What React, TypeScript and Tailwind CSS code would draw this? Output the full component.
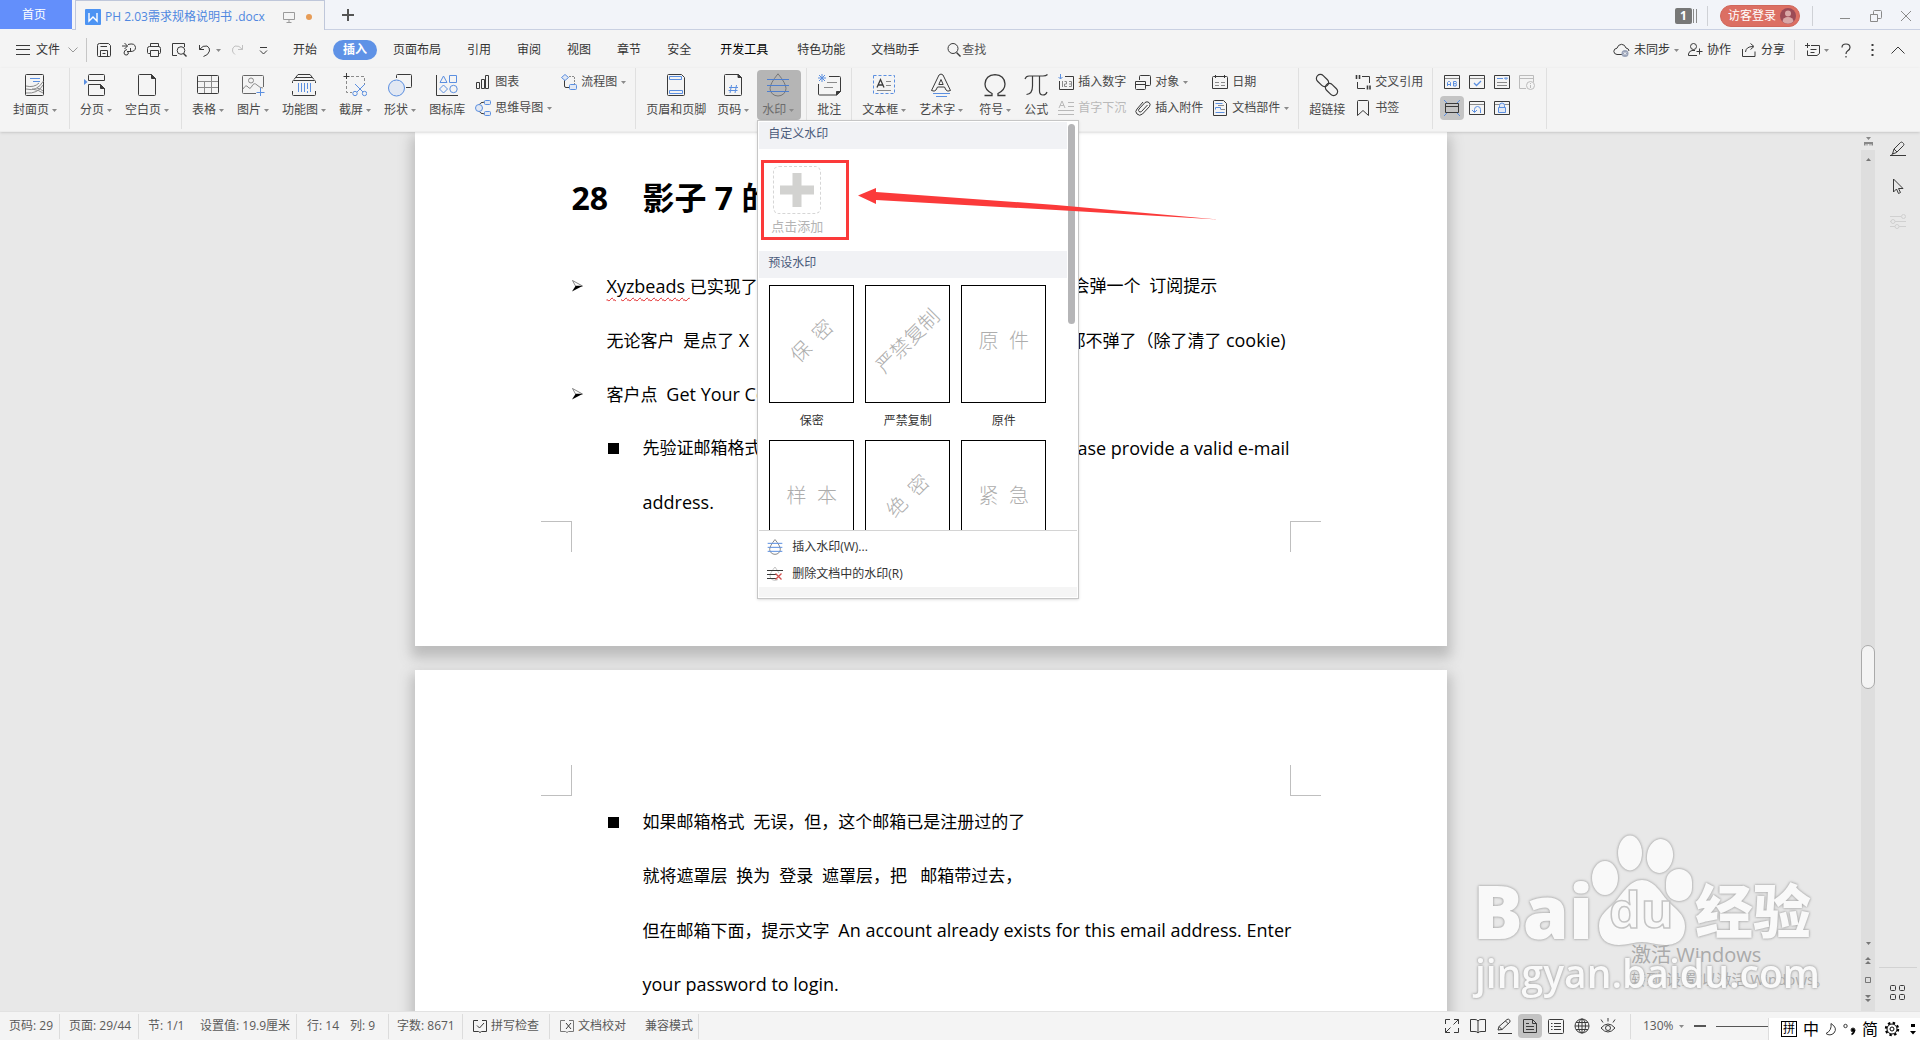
import React from "react";

const K = "#3a3a3a";
const B = "#5b8fe0";
const G = "#8a8a8a";

type IconProps = { w?: number; h?: number; c?: string; sw?: number; children: React.ReactNode };

function Ico({ w = 16, h = 16, c = K, sw = 1, children }: IconProps) {
  return (
    <svg width={w} height={h} viewBox={`0 0 ${w} ${h}`} fill="none" stroke={c} strokeWidth={sw} className="shrink-0" aria-hidden="true">
      {children}
    </svg>
  );
}

function Arrow() {
  return (
    <svg width="5" height="3" viewBox="0 0 5 3" className="shrink-0" aria-hidden="true">
      <path d="M0 0h5L2.500 3z" fill="#8a8a8a" />
    </svg>
  );
}

function Sep() {
  return <div className="h-[61px] w-px shrink-0 bg-[#e0e0e0]" />;
}

function Big({ icon, label, arrow, active }: { icon: React.ReactNode; label: string; arrow?: boolean; active?: boolean }) {
  return (
    <button
      className={
        "flex h-[50px] shrink-0 flex-col items-center gap-[5px] rounded pt-[3px] pl-[5px] " +
        (arrow ? "pr-[7px] " : "pr-[5px] ") +
        (active ? "bg-[#b5b5b5] text-[#6c6c6c]" : "")
      }
    >
      {icon}
      <span className="flex items-center gap-[3px] leading-4">
        {label}
        {arrow && <Arrow />}
      </span>
    </button>
  );
}

function Small({ icon, label, arrow, off }: { icon: React.ReactNode; label: string; arrow?: boolean; off?: boolean }) {
  return (
    <button className={"flex h-6 items-center gap-1 px-1 " + (off ? "text-[#b9b9b9]" : "")}>
      {icon}
      <span>{label}</span>
      {arrow && <Arrow />}
    </button>
  );
}

function FormBtn({ label, active, children }: { label: string; active?: boolean; children: React.ReactNode }) {
  return (
    <button aria-label={label} className={"flex size-6 items-center justify-center rounded " + (active ? "bg-[#c4c4c4]" : "")}>
      {children}
    </button>
  );
}

const Group = ({ children }: { children: React.ReactNode }) => <div className="flex gap-px px-[5px] pt-0.5">{children}</div>;
const Col = ({ children }: { children: React.ReactNode }) => <div className="flex flex-col gap-0.5">{children}</div>;

function TitleBar() {
  return (
    <header className="flex h-[30px] shrink-0 bg-[#f2f4f9]">
      <button className="mb-px w-[72px] bg-[#638ffb] pr-1 text-white">首页</button>
      <div className="w-[3px] border-b border-[#bfc7da]" />
      <div className="flex w-[250px] items-center border-x border-t border-[#bfc7da] bg-[#f4f4f4] pt-0.5 pl-[9px] text-[#4f87e0]">
        <svg width="16" height="16" viewBox="0 0 16 16" className="mr-1 shrink-0" aria-hidden="true">
          <rect width="16" height="16" rx="1" fill="#4d94f3" />
          <path d="M4 4v8l4-4 4 4V4" fill="none" stroke="#fff" strokeWidth="1.4" />
        </svg>
        <span className="w-[178px] whitespace-pre">PH 2.03需求规格说明书 .docx</span>
        <Ico w={12} h={12} c="#9a9a9a">
          <path d="M.5 1.500h11v7H.5zM6 8.500v2.500M3.500 11.500h5" />
        </Ico>
        <span className="ml-[11px] size-1.5 rounded-full bg-[#e79c56]" />
      </div>
      <div className="flex flex-1 items-center border-b border-[#c9d0e2]">
        <button aria-label="新建标签" className="ml-[17px]">
          <Ico w={12} h={12} c="#555" sw={2}>
            <path d="M6 0v12M0 6h12" />
          </Ico>
        </button>
        <div className="ml-auto flex items-center pt-0.5">
          <span className="flex h-4 w-[17px] items-center justify-center rounded-xs bg-[#777] font-bold text-white">1</span>
          <Ico w={5} h={16} c="#8a8a8a">
            <path d="M1.500 1v14M4.500 1v14" />
          </Ico>
          <div className="ml-2.5 h-5 w-px bg-[#cfd1d6]" />
          <button className="ml-3 flex h-[22px] w-20 items-center justify-center gap-1 rounded-full border border-[#d0675c] bg-[#dc6f63] pl-1 text-white">
            访客登录
            <svg width="16" height="16" viewBox="0 0 16 16" aria-hidden="true">
              <circle cx="8" cy="8" r="8" fill="#9c4a56" />
              <circle cx="8" cy="5.500" r="3" fill="#d9a7a7" />
              <path d="M2.500 13.500a5.500 4.500 0 0 1 11 0A8 8 0 0 1 2.500 13.500z" fill="#d9a7a7" />
            </svg>
          </button>
          <div className="ml-3 h-5 w-px bg-[#cfd1d6]" />
          <button aria-label="最小化" className="ml-[27px]">
            <Ico w={11} h={12} c={G}>
              <path d="M0 8.500h10" />
            </Ico>
          </button>
          <button aria-label="还原" className="ml-[19px]">
            <Ico w={12} h={12} c={G}>
              <path d="M.5 4.500h7v7h-7zM3.500 4V1.500q0-1 1-1h6q1 0 1 1v6q0 1-1 1H8" />
            </Ico>
          </button>
          <button aria-label="关闭" className="mr-2 ml-[18px]">
            <Ico w={12} h={12} c={G}>
              <path d="M1 1l10 10M11 1L1 11" />
            </Ico>
          </button>
        </div>
      </div>
    </header>
  );
}

const tabsA = ["页面布局", "引用", "审阅", "视图", "章节", "安全"];

function MenuBar() {
  return (
    <nav className="flex h-[38px] shrink-0 items-center pt-0.5 pl-4 text-[#333]">
      <button className="flex items-center gap-1.5">
        <Ico w={14} h={10}>
          <path d="M0 .5h14M0 4.500h14M0 9.500h14" />
        </Ico>
        <span className="mr-0.5">文件</span>
        <Ico w={10} h={6} c="#999">
          <path d="M.5.5L5 5l4.500-4.500" />
        </Ico>
      </button>
      <div className="ml-2 h-6 w-px bg-[#c6c6c6]" />
      <div className="flex items-center gap-[9px] pl-[9px]">
        <button aria-label="保存"><Ico><path d="M1.500 3.500q0-2 2-2h9l2 2v10q0 1-1 1h-11q-1 0-1-1zM4.500 14.500v-6h7v6M4.500 4.500h6.500M6.500 11.500h3" /></Ico></button>
        <button aria-label="输出为PDF"><Ico><path d="M3.500 1l3 3-3 3M1 4h5.500M7 2.500q7-2 7.500 3q0 4-5 4H6M9.500 6v4M6 7.500q-3 .5-3 3.500q.3 2.500 3 2q2-.5 1-3" /></Ico></button>
        <button aria-label="打印"><Ico><path d="M4.500 5V1.500h8V5M4 11.500H2.500q-1 0-1-1V6.500q0-2 2-2h9q2 0 2 2v4q0 1-1 1H12M4.500 8.500h8v6h-8z" /></Ico></button>
        <button aria-label="打印预览"><Ico><path d="M6 13.500H1.500v-12h12V5" /><circle cx="10" cy="8.500" r="3.800" /><path d="M12.500 11.500l3 3" strokeWidth="1.400" /></Ico></button>
      </div>
      <button aria-label="撤消" className="ml-[11px] flex items-center gap-[5px]">
        <Ico w={13} h={13}><path d="M1.500 1v4.500H6M1.500 5.500Q5 1 9 2q3 1.500 2.500 5-1 4-6 5.500" /></Ico>
        <Arrow />
      </button>
      <button aria-label="恢复" className="ml-2.5">
        <Ico w={13} h={13} c="#c0c0c0"><path d="M11.500 1v4.500H7M11.500 5.500Q8 1 4 2q-3 1.500-2.500 5 .5 2 2.500 3.500" /></Ico>
      </button>
      <button aria-label="自定义快速访问工具栏" className="ml-[15px]">
        <Ico w={9} h={9}><path d="M1 1.500h7M1 4.500l3.500 3.500L8 4.500" /></Ico>
      </button>
      <div className="ml-[15px] flex items-center gap-1.5">
        <button className="h-5 px-2.5">开始</button>
        <button className="h-5 rounded-full bg-[#5f92e6] px-2.5 font-bold text-white">插入</button>
        {tabsA.map((t) => (
          <button key={t} className="h-5 px-2.5">{t}</button>
        ))}
      </div>
      <button className="mx-[9px] h-5 px-2.5 text-black">开发工具</button>
      <div className="flex gap-1.5">
        <button className="h-5 px-2.5">特色功能</button>
        <button className="h-5 px-2.5">文档助手</button>
      </div>
      <button className="ml-[17px] flex items-center text-[#555]">
        <Ico><circle cx="7" cy="6.500" r="5" /><path d="M10.500 10.500l4 4" strokeWidth="1.400" /></Ico>
        查找
      </button>
      <div className="ml-auto flex items-center">
        <button className="flex items-center gap-1">
          <Ico w={17}><path d="M10 12.500H4q-3-.3-3.200-3.200Q1 6.500 4 6.200 5 2.500 8.500 2.300q3.500.2 4.500 3.700 3 .5 3 3" /><circle cx="12" cy="11.500" r="3.500" fill="#9aa3b8" stroke="none" /><path d="M10.800 10.300l2.400 2.400M13.200 10.300l-2.400 2.400" stroke="#fff" /></Ico>
          未同步
          <Arrow />
        </button>
        <button className="ml-2 flex items-center gap-1">
          <Ico><circle cx="6.500" cy="4.500" r="3" /><path d="M10 13.500H1.500V12q.5-3 3.500-3.500h3M12.500 6.500v6M9.500 9.500h6" /></Ico>
          协作
        </button>
        <button className="ml-2.5 flex items-center gap-1">
          <Ico><path d="M1.500 7v7.500h12.500V9.500M4.500 10Q5 4.500 12 4.500M9.500 1.500l3.500 3-3.500 3" /></Ico>
          分享
        </button>
        <div className="mx-[9px] h-5 w-px bg-[#d8d8d8]" />
        <button aria-label="工具" className="flex items-center gap-1">
          <Ico><path d="M3.500 1v5M1 3.500h5M7 3.500h8.500v8l-2.500 2H3.500v-5M6.500 7.500h6M6.500 10.500h4" /></Ico>
          <Arrow />
        </button>
        <button aria-label="帮助" className="ml-3">
          <Ico w={10} h={15} sw={1.200}><path d="M1 4.500Q1 1 5 1t4 3.500Q9 6.500 6.500 8 5 9 5 11M5 13v1.500" /></Ico>
        </button>
        <button aria-label="更多" className="ml-5">
          <Ico w={3} h={12} sw={2}><path d="M1.500 0v2M1.500 5v2M1.500 10v2" /></Ico>
        </button>
        <button aria-label="收起功能区" className="mr-[15px] ml-[17px]">
          <Ico w={14} h={8}><path d="M.5 7.500L7 1l6.500 6.500" /></Ico>
        </button>
      </div>
    </nav>
  );
}

function DropIcon({ size = 24, line = B, drop = G }: { size?: number; line?: string; drop?: string }) {
  return (
    <svg width={size} height={size} viewBox="0 0 24 24" fill="none" strokeWidth={size > 20 ? 1 : 1.5} className="shrink-0" aria-hidden="true">
      <path d="M12 .8Q4 10.500 4 15.500a8 7.500 0 0 0 16 0Q20 10.500 12 .8z" stroke={drop} />
      <path d="M1 6.500h22M1 12.500h22M1 18.500h22" stroke={line} />
    </svg>
  );
}

const previews = [
  { name: "保密", text: "保  密", tilt: true },
  { name: "严禁复制", text: "严禁复制", tilt: true },
  { name: "原件", text: "原  件", tilt: false },
  { name: "样本", text: "样  本", tilt: false },
  { name: "绝密", text: "绝  密", tilt: true },
  { name: "紧急", text: "紧  急", tilt: false },
];

function WatermarkMenu() {
  return (
    <div className="absolute top-full left-0 z-20 w-[322px] border border-[#c6c6c6] bg-white text-left shadow-sm">
      <div className="flex h-[409px] gap-px overflow-hidden pt-px pr-0.5 pl-px">
        <div className="flex-1">
          <h2 className="h-[27px] bg-[#f1f2f5] pl-[9px] leading-6 text-[#4a5a7a]">自定义水印</h2>
          <div className="h-[102px] pt-[17px] pl-3">
            <button className="flex flex-col items-center gap-1 text-[13px] text-[#b4b4b4]">
              <span className="flex size-12 items-center justify-center rounded-md border border-dashed border-[#d6d6d6]">
                <Ico w={36} h={36} c="#d2d2d0" sw={9}>
                  <path d="M18 1v34M1 18h34" />
                </Ico>
              </span>
              <span className="leading-4">点击添加</span>
            </button>
          </div>
          <h2 className="h-[27px] bg-[#f1f2f5] pl-[9px] leading-6 text-[#4a5a7a]">预设水印</h2>
          <div className="grid grid-cols-[repeat(3,85px)] gap-x-[11px] pt-[7px] pl-2.5">
            {previews.map((p) => (
              <button key={p.name} className="flex h-[155px] flex-col text-[#333]">
                <span className="flex h-[118px] w-full items-center justify-center border border-black pb-1.5 text-[20px] font-light text-[#adadad]">
                  <span className={"whitespace-pre " + (p.tilt ? "-rotate-45" : "")}>{p.text}</span>
                </span>
                <span className="w-full pt-2.5 text-center leading-4">{p.name}</span>
              </button>
            ))}
          </div>
        </div>
        <div className="w-2 pt-0.5">
          <div className="h-[200px] w-[7px] rounded-full bg-[#b5b5b7]" />
        </div>
      </div>
      <div className="mx-px border-t border-[#d4d4d4] pt-0.5 text-[#333]">
        <button className="flex h-[27px] w-full items-center gap-[9px] pl-2">
          <DropIcon size={16} />
          插入水印(W)...
        </button>
        <button className="flex h-[27px] w-full items-center gap-[9px] pl-2">
          <Ico>
            <path d="M8 1Q3 7 3 10a5 4.500 0 0 0 8 3.500M8 1l4 6" stroke="#c4c4c4" />
            <path d="M0 4.500h16M0 8.500h9M0 12.500h9" />
            <path d="M8.500 7.500l6 6M14.500 7.500l-6 6" stroke="#d2504f" strokeWidth="1.300" />
          </Ico>
          删除文档中的水印(R)
        </button>
        <div className="mb-px h-2.5 bg-[#f5f5f5]" />
      </div>
      <div className="pointer-events-none absolute top-[39px] left-[3px] h-20 w-[88px] border-3 border-[#fb3a3a]" />
      <svg width="362" height="34" viewBox="0 0 362 34" className="pointer-events-none absolute top-[66px] left-[100px] max-w-none" aria-hidden="true">
        <path d="M0 8.500L18 1v4l180 13 162 14.500L198 23 18 13v4z" fill="#fb3a3a" />
      </svg>
    </div>
  );
}

function Ribbon() {
  return (
    <div className="relative z-10 flex h-16 shrink-0 border-b border-[#ececec] bg-[#f4f4f4] pl-[3px] text-[#484848] shadow-sm">
      <Group>
        <Big label="封面页" arrow icon={<Ico w={24} h={24}><rect x="2.500" y="1.500" width="18" height="21" rx="1" /><path d="M7 5.500h10M10 8.500h7" stroke={B} /><path d="M3 13q8 2 13-3M3 16q11 3 17.500-8M3 20q12 1 17-8M9 16q7 1 11 4M14 15q4 1 6 3" stroke={G} /></Ico>} />
      </Group>
      <Sep />
      <Group>
        <Big label="分页" arrow icon={<Ico w={24} h={24}><path d="M0 6l3.500 3L0 12z" fill={B} stroke="none" /><path d="M4.500 7.500v-5q0-1 1-1h14q1 0 1 1v5zM4.500 22.500v-11h12l4 4v6q0 1-1 1h-14q-1 0-1-1" /><path d="M16.500 11.500v4h4z" fill={K} /></Ico>} />
        <Big label="空白页" arrow icon={<Ico w={24} h={24}><path d="M3.500 2.500q0-1 1-1h12l4 4v16q0 1-1 1h-15q-1 0-1-1z" /><path d="M16.500 1.500v4h4z" fill={K} /></Ico>} />
      </Group>
      <Sep />
      <Group>
        <Big label="表格" arrow icon={<Ico w={24} h={24}><path d="M2 8.500h20M2 14.500h20M8.500 8.500v12M15.500 2v18" stroke={G} /><rect x="1.500" y="2.500" width="21" height="18" rx="1" /></Ico>} />
        <Big label="图片" arrow icon={<Ico w={24} h={24}><path d="M15 20.500H2.500q-1 0-1-1v-16q0-1 1-1h19q1 0 1 1V14" stroke="#666" /><circle cx="10" cy="7.500" r="2.500" stroke={G} /><path d="M2 16q3-5 5-2t4-1 5-1 6 3" stroke={G} /><path d="M19.500 15v8M15.500 19.500h8" stroke={B} /></Ico>} />
        <Big label="功能图" arrow icon={<Ico w={24} h={24}><path d="M6 1.500h12M4 4.500h16M.5 10V8.500q0-1 1-1h21q1 0 1 1V10M.5 18v3.500q0 1 1 1h21q1 0 1-1V18M6 1.500l-4 5M18 1.500l4 5" /><path d="M6.500 10v9M9.500 10v9M12.500 10v9M15.500 10v6M15.500 18v2M18.500 10v9" stroke={B} /></Ico>} />
        <Big label="截屏" arrow icon={<Ico w={24} h={24}><path d="M8 3.500h13.500V12M3.500 8v11.500H9" strokeDasharray="3 2" stroke={G} /><path d="M3.500 0v6M.5 3.500h6" /><g stroke={B}><path d="M12 11l8 8M22 11l-8 8" /><circle cx="12" cy="20.500" r="2.200" /><circle cx="21.500" cy="20.500" r="2.200" /></g></Ico>} />
        <Big label="形状" arrow icon={<Ico w={24} h={24}><path d="M8.500 5V2.500q0-1 1-1h13q1 0 1 1v11q0 1-1 1H18" /><circle cx="8.500" cy="15" r="8" stroke={B} fill="#e2e8f3" /></Ico>} />
        <Big label="图标库" icon={<Ico w={24} h={24}><path d="M1.500 2v20.500H23" /><g stroke={B}><path d="M8.500 3L12 9.500H5zM14.500 2.500h7v7h-7zM8.500 12l4 4-4 4-4-4z" /><circle cx="18.500" cy="16" r="3.700" /></g></Ico>} />
        <Col>
          <Small label="图表" icon={<Ico><path d="M1.500 8.500h3v6h-3zM6.500 5.500h3v9h-3zM10.500 1.500h3v13h-3z" /></Ico>} />
          <Small label="思维导图" arrow icon={<Ico><path d="M4 5q1-3 6-3M4 11q1 3 6 3" /><g stroke={B} fill="#e2e8f3"><circle cx="4" cy="8" r="3.500" /><rect x="9.500" y=".5" width="6" height="4" rx="1" /><rect x="9.500" y="11.500" width="6" height="4" rx="1" /></g></Ico>} />
        </Col>
        <Col>
          <Small label="流程图" arrow icon={<Ico><path d="M3.500 6v6q0 1.500 1.500 1.500h3" /><path d="M8 2.500h5.500V10" stroke={G} strokeDasharray="2 1" /><g stroke={B} fill="#e2e8f3"><path d="M4 .5l3.500 3L4 6.500.5 3.500z" /><rect x="8.500" y="10.500" width="7" height="5" rx="1" /></g></Ico>} />
        </Col>
      </Group>
      <Sep />
      <Group>
        <Big label="页眉和页脚" icon={<Ico w={24} h={24}><path d="M3.500 2.500q0-1 1-1h13l3 3v17q0 1-1 1h-15q-1 0-1-1z" /><path d="M5.500 3.500h12v3h-12zM5.500 17.500h13v3h-13z" stroke={B} /></Ico>} />
        <Big label="页码" arrow icon={<Ico w={24} h={24}><path d="M3.500 2.500q0-1 1-1h13l3 3v17q0 1-1 1h-15q-1 0-1-1z" /><path d="M17 1.500v3h3.500z" fill={K} /><path d="M10.500 12l-1.500 8M15.500 12L14 20M8 14.500h9M7.500 17.500h9" stroke={B} /></Ico>} />
        <div className="relative h-[50px]">
          <Big label="水印" arrow active icon={<DropIcon drop="#777" line="#4f7fce" />} />
          <WatermarkMenu />
        </div>
      </Group>
      <Sep />
      <Group>
        <Big label="批注" icon={<Ico w={24} h={24}><path d="M12 3.500h10.500q1 0 1 1v14l-4 3.500h-17q-1 0-1-1V11" /><path d="M19.500 22v-3.500h4z" fill={K} /><path d="M10 9.500h10M7 14.500h9" stroke={G} /><path d="M5 1v8M1 5h8M2 2l6 6M8 2L2 8" stroke={B} /></Ico>} />
      </Group>
      <Sep />
      <Group>
        <Big label="文本框" arrow icon={<Ico w={24} h={24}><rect x="1.500" y="2.500" width="21" height="18" stroke={B} strokeDasharray="3 2" /><path d="M5 14.500L8.500 6.500 12 14.500M6.500 12h4.500" strokeWidth="1.300" /><path d="M14 8.500h5M14 12.500h5M5 17.500h14" stroke={G} /></Ico>} />
        <Big label="艺术字" arrow icon={<Ico w={24} h={24}><path d="M2.500 17.500L10 2q2-2 4 0l7.500 15.500q-3 1.500-4.500-.5l-1.500-3h-7L7 17q-1.500 2-4.500.5zM9.800 11.500L12 6.500l2.200 5z" /><path d="M4 20.500h17M7 23.500h11" stroke={B} /></Ico>} />
        <div className="w-0.5" />
        <Big label="符号" arrow icon={<Ico w={24} h={24} sw={1.300}><path d="M1.500 22.500H9v-2Q2 17 2 11 2.500 2 12 1.600 21.500 2 22 11q0 6-7 9.500v2h7.500" /></Ico>} />
        <Big label="公式" icon={<Ico w={24} h={24} sw={1.200}><path d="M1 6q1-3 4-3h14q3 0 4.500-1.500M8.500 3v10q0 8-6 8.500M15.500 3v15q0 4 3.500 4 3 0 4-3" /></Ico>} />
        <Col>
          <Small label="插入数字" icon={<Ico><path d="M7 2.500h8.500v13H1.500V7" /><path d="M2.500 0v5M.5 3l2 2 2-2" stroke={B} /><path d="M4.500 7v6M6.500 7.500h2v2.500h-2v2.500h2.500M11 7.500h2.500v5H11M11 10h2.500" stroke={G} /></Ico>} />
          <Small label="首字下沉" off icon={<Ico c="#b9b9b9"><path d="M1 8l3-7 3 7M2 5.500h4M10 2.500h6M10 6.500h6M0 10.500h16M0 14.500h16" /></Ico>} />
        </Col>
        <Col>
          <Small label="对象" arrow icon={<Ico><path d="M4.500 6V2.500q0-1 1-1h9q1 0 1 1v8q0 1-1 1H11M.5 7.500h10v7q0 1-1 1h-8q-1 0-1-1zM.5 10.500h10" /></Ico>} />
          <Small label="插入附件" icon={<Ico><path d="M12.500 5l-6 6.500q-1.500 1-2.500 0t0-2.500l6-6.500q2-1.500 4 0t.5 4L7.500 14q-3 2.500-5.500 0t0-5L8 2" /></Ico>} />
        </Col>
        <Col>
          <Small label="日期" icon={<Ico><path d="M.5 3.500q0-1 1-1h13q1 0 1 1v11h-15zM3.500 1v3M12.500 1v3" /><path d="M3 8.500h4M9 8.500h4M3 11.500h4M9 11.500h4" stroke={G} /></Ico>} />
          <Small label="文档部件" arrow icon={<Ico><path d="M1.500 1q0-.5 1-.5h9l3 3v12h-13z" /><path d="M3.500 3.500h7M3.500 9.500v-2h5v2M3.500 12.500h9" stroke={B} /><path d="M6 5.500h6M9 9.500h4" stroke={G} /></Ico>} />
        </Col>
      </Group>
      <Sep />
      <Group>
        <Big label="超链接" icon={<Ico w={24} h={24} sw={1.200}><rect x="-7" y="-4" width="14" height="8" rx="4" transform="translate(7.500 7.500) rotate(45)" /><rect x="-7" y="-4" width="14" height="8" rx="4" transform="translate(16.500 16.500) rotate(45)" /></Ico>} />
        <Col>
          <Small label="交叉引用" icon={<Ico><path d="M7 2.500h7.500V9M2.500 8v6.500H10" /><path d="M1.500 1v4M4.500 1v4M12.500 11.500v4M15 11.500v4" strokeWidth="1.600" /></Ico>} />
          <Small label="书签" icon={<Ico><path d="M2.500 1.500q0-1 1-1h9q1 0 1 1v14L8 10.500l-5.500 5z" /></Ico>} />
        </Col>
      </Group>
      <Sep />
      <Group>
        <div className="ml-0.5 grid grid-cols-4 content-start gap-x-px gap-y-0.5">
          <FormBtn label="文字型窗体域"><Ico><path d="M.5 1.500h15v13H.5z" /><path d="M1 4.500h14" stroke={G} /><path d="M3.500 12V8.500l1-1h1l1 1V12M3.500 10.500h3M9.500 7.500h2.500l.5 1-.5 1.200.5 1-.5 1.300H9.500zM9.500 9.700h2.500" stroke={B} /></Ico></FormBtn>
          <FormBtn label="复选框型窗体域"><Ico><path d="M.5 1.500h15v13H.5z" /><path d="M1 4.500h14" stroke={G} /><path d="M5 9l2.500 2.500L12 7" stroke={B} strokeWidth="1.300" /></Ico></FormBtn>
          <FormBtn label="下拉型窗体域"><Ico><path d="M.5 1.500h15v13H.5z" /><path d="M3 8.500h10M3 11.500h10" stroke={G} /><path d="M3 4.500h6M10.500 4h3L12 5.500z" stroke={B} /></Ico></FormBtn>
          <FormBtn label="窗体域选项"><Ico c="#bcbcbc"><path d="M7 14.500H.5v-13h14V8M1 4.500h13.500" /><circle cx="11.500" cy="11.500" r="4" /><path d="M11.500 9v1M11.500 11v3" /></Ico></FormBtn>
          <FormBtn label="窗体域底纹" active><Ico><path d="M0 0l4 4M16 0l-4 4M0 16l4-4M16 16l-4-4" stroke={B} /><path d="M1.500 3.500h13v9h-13zM2 6.500h12" /></Ico></FormBtn>
          <FormBtn label="重置窗体域"><Ico><path d="M.5 1.500h15v13H.5z" /><path d="M1 4.500h14" stroke={G} /><path d="M3 10l2.500 2.500L8 10M5.500 12V9.500q0-3 3-3t3 3v3.500" stroke={B} /></Ico></FormBtn>
          <FormBtn label="保护窗体"><Ico><path d="M.5 1.500h15v13H.5z" /><path d="M1 4.500h14" stroke={G} /><path d="M4.500 7.500h7v5h-7zM5.500 7.500V5.500Q5.500 3 8 3t2.500 2.500v2" stroke={B} fill="#e2e8f3" /></Ico></FormBtn>
        </div>
      </Group>
      <div className="w-0.5" />
      <Sep />
    </div>
  );
}

function Marker() {
  return (
    <svg width="11" height="12" viewBox="0 0 11 12" className="mr-6 shrink-0" aria-hidden="true">
      <path d="M.5.5L10.500 6H3.500z" fill="#fff" stroke="#555" strokeWidth=".7" />
      <path d="M3.500 6h7L0 11.500z" fill="#000" />
    </svg>
  );
}

function Square() {
  return <span className="mr-6 size-[11px] shrink-0 bg-black" />;
}

const En = ({ children }: { children: React.ReactNode }) => <span className="text-[18px]">{children}</span>;

function Corners({ end }: { end?: boolean }) {
  return (
    <div className="flex justify-between">
      <div className={"h-[31px] w-[31px] border-r border-[#bfbfbf] " + (end ? "border-t" : "border-b")} />
      <div className={"h-[31px] w-[31px] border-l border-[#bfbfbf] " + (end ? "border-t" : "border-b")} />
    </div>
  );
}

function Documents() {
  return (
    <main className="flex min-w-0 flex-1 flex-col items-center gap-6 overflow-hidden text-[17px] leading-[54px] whitespace-pre text-black">
      <article className="h-[514px] w-[1032px] shrink-0 bg-white shadow-[0_8px_12px_4px_#bdbdbd]">
        <div className="px-[157px]">
          <h1 className="flex h-[127px] items-center pt-1 text-[32px] font-bold">
            <span className="w-[71px]">28</span>影子 7 的
          </h1>
          <div className="flex h-[54px] items-center">
            <Marker />
            <span className="w-[466px]">
              <En><span className="underline decoration-[#e02020] decoration-wavy decoration-1 underline-offset-4">Xyzbeads </span></En>已实现了
            </span>
            会弹一个  订阅提示
          </div>
          <div className="flex h-[54px] items-center pl-[35px]">
            <span className="w-[462px]">无论客户  是点了 <En>X</En></span>
            <span>都不弹了（除了清了 <En>cookie)</En></span>
          </div>
          <div className="flex h-[54px] items-center">
            <Marker />
            <span>客户点  <En>Get Your Co</En></span>
          </div>
          <div className="flex h-[54px] items-center pl-9">
            <Square />
            <span className="flex-1">先验证邮箱格式</span>
            <En>Please provide a valid e-mail</En>
          </div>
          <div className="h-[54px] pl-[71px]"><En>address.</En></div>
        </div>
        <div className="-mt-2 px-[126px]">
          <Corners end />
        </div>
      </article>
      <article className="h-[480px] w-[1032px] shrink-0 bg-white shadow-[0_8px_12px_4px_#bdbdbd]">
        <div className="px-[126px] pt-[95px]">
          <Corners />
        </div>
        <div className="-mt-px px-[157px]">
          <div className="flex h-[54px] items-center pl-9">
            <Square />
            如果邮箱格式  无误，但，这个邮箱已是注册过的了
          </div>
          <p className="h-[54px] pl-[71px]">就将遮罩层  换为  登录  遮罩层，把   邮箱带过去，</p>
          <p className="h-[54px] pl-[71px]">但在邮箱下面，提示文字  <En>An account already exists for this email address. Enter</En></p>
          <p className="h-[54px] pl-[71px]"><En>your password to login.</En></p>
        </div>
      </article>
    </main>
  );
}

function ScrollRail() {
  return (
    <div className="flex w-3.5 shrink-0 flex-col items-center">
      <div className="flex h-[18px] items-center">
        <Ico w={9} h={9} c="#888"><path d="M2 0h5L4.500 3zM0 5h9v3.500H7.500V7h-1v1.500h-1V7h-2v1.500h-1V7h-1v1.500H0z" fill="#888" stroke="none" /></Ico>
      </div>
      <div className="flex w-full flex-1 flex-col items-center bg-[#dedede] pt-2">
        <Ico w={5} h={3}><path d="M0 3h5L2.500 0z" fill="#777" stroke="none" /></Ico>
        <div className="mt-[484px] h-11 w-3.5 rounded-full border border-[#aaa] bg-[#f4f4f4]" />
        <div className="mt-auto flex flex-col items-center gap-3 pb-2">
          <Ico w={5} h={3}><path d="M0 0h5L2.500 3z" fill="#777" stroke="none" /></Ico>
          <Ico w={6} h={8}><path d="M0 3h6L3 0zM0 7h6L3 4z" fill="#777" stroke="none" /></Ico>
          <Ico w={6} h={6} c="#777"><path d="M.5.5h5v5h-5z" /></Ico>
          <Ico w={6} h={8}><path d="M0 0h6L3 3zM0 4h6L3 7z" fill="#777" stroke="none" /></Ico>
        </div>
      </div>
    </div>
  );
}

function SidePanel() {
  return (
    <aside className="flex w-[45px] shrink-0 flex-col items-center">
      <button aria-label="样式和格式" className="mt-[9px]"><Ico><path d="M0 14.500h16M3.500 12L1 14.500M4 8L10.500 1.500q1-.8 2 0l1 1q.8 1 0 2L6.500 11.500 2.500 13zM4 8l3 3" /></Ico></button>
      <button aria-label="选择" className="mt-[21px]"><Ico w={12} h={17}><path d="M1.500 1v13l3-3 2 4.500 2-1-2-4h4.500z" /></Ico></button>
      <button aria-label="属性" className="mt-[19px]"><Ico c="#d0d0d0"><path d="M0 2.500h11M5 7.500h11M0 7.500h1M0 12.500h5M9 12.500h7" /><circle cx="13.500" cy="2.500" r="2" /><circle cx="3" cy="7.500" r="2" /><circle cx="7" cy="12.500" r="2" /></Ico></button>
      <div className="mt-auto h-px w-[38px] bg-[#d2d2d2]" />
      <button aria-label="应用" className="mt-[17px] mb-[11px]"><Ico w={15} h={15}><rect x=".5" y=".5" width="5" height="5" rx="1" /><rect x="9.500" y=".5" width="5" height="5" rx="1" /><rect x=".5" y="9.500" width="5" height="5" rx="1" /><rect x="9.500" y="9.500" width="5" height="5" rx="1" /></Ico></button>
    </aside>
  );
}

function Watermark() {
  return (
    <div className="pointer-events-none absolute right-[87px] bottom-1 h-[182px] w-[360px] whitespace-nowrap">
      <div className="absolute top-[114px] left-[158px] text-xl leading-8 text-[#aaa]">激活 Windows</div>
      <div className="absolute top-[140px] left-[158px] text-[15px] leading-7 text-[#aaa]">转到“设置”以激活 Windows。</div>
      <div className="text-[#f9f9f9] [filter:drop-shadow(0_0_1px_#aaa)_drop-shadow(0_0_1px_#bbb)]">
        <span className="absolute top-[46px] left-0 text-[74px] leading-[80px] font-extrabold">Bai</span>
        <svg width="104" height="112" viewBox="0 0 104 112" className="absolute top-2.5 left-[117px]" aria-hidden="true">
          <g fill="#f9f9f9">
            <ellipse cx="15" cy="43" rx="13" ry="17" />
            <ellipse cx="40" cy="18" rx="12" ry="17.500" />
            <ellipse cx="70" cy="21" rx="13" ry="17" transform="rotate(8 70 21)" />
            <rect x="76" y="34" width="26" height="32" rx="13" />
            <path d="M52 45c12 0 19 13 25 20 8 9 18 14 18 26 0 15-10 19-20 19-9 0-15-3-23-3s-14 3-23 3c-12 0-20-6-20-19 0-12 9-16 17-25 7-8 14-21 26-21z" />
          </g>
        </svg>
        <span className="absolute top-[46px] left-[222px] text-[58px] leading-[80px] font-black">经验</span>
        <span className="absolute top-[123px] left-0.5 text-[39px] leading-[50px] font-semibold">jingyan.baidu.com</span>
      </div>
      <span className="absolute top-[54px] left-[136px] text-[50px] leading-[60px] font-bold text-[#f9f9f9] [-webkit-text-stroke:1.500px_#c4c4c4]">du</span>
    </div>
  );
}

const StatusSep = () => <div className="h-[25px] w-px shrink-0 bg-[#dcdcdc]" />;

function StatusBar() {
  return (
    <footer className="relative flex h-[29px] shrink-0 items-center overflow-hidden border-t border-[#e2e2e2] bg-[#f4f4f4] text-[#5a5a5a]">
      <span className="w-[59px] pl-[9px]">页码: 29</span>
      <StatusSep />
      <span className="w-[78px] pl-[9px]">页面: 29/44</span>
      <StatusSep />
      <span className="w-[61px] pl-[9px]">节: 1/1</span>
      <span className="w-24">设置值: 19.9厘米</span>
      <StatusSep />
      <span className="w-[53px] pl-2.5">行: 14</span>
      <span className="w-[38px]">列: 9</span>
      <StatusSep />
      <span className="w-[73px] pl-2">字数: 8671</span>
      <StatusSep />
      <button className="flex w-[86px] items-center gap-[3px] pl-[9px]">
        <Ico><path d="M6 2.500H1.500v11h5l1.500 1 1.500-1h5v-11H10" /><path d="M5 7.500l2.500 2.500L12 5" /></Ico>
        拼写检查
      </button>
      <StatusSep />
      <button className="flex w-[95px] items-center gap-[3px] pl-[9px]">
        <Ico c="#777"><path d="M6 2.500H1.500v11h5l1.500 1 1.500-1h5v-11H10" /><path d="M7 5l5 6M12 5l-5 6" stroke={K} /></Ico>
        文档校对
      </button>
      <span className="w-[53px]">兼容模式</span>
      <StatusSep />
      <div className="ml-auto flex items-center gap-2.5">
        <button aria-label="全屏显示"><Ico><path d="M1.500 6V1.500H6M10 1.500h4.500V6M14.500 10v4.500H10M6 14.500H1.500V10M9.500 6.500l5-5M6.500 9.500l-5 5" /></Ico></button>
        <button aria-label="阅读版式"><Ico><path d="M8 3v12M8 3Q7 1.500 5 1.500H.5v12H5q2 0 3 1.500 1-1.500 3-1.500h4.500v-12H11q-2 0-3 1.500z" /></Ico></button>
        <button aria-label="写作模式"><Ico><path d="M2 15.500h14M2 12l1-3.500L11 1.500q1.500-.8 2.500.3t.3 2.400L6 11.500zM3 8.500l3 3M9.500 3l2.800 2.800" /></Ico></button>
        <button aria-label="页面视图" className="-mx-1 flex size-6 items-center justify-center rounded bg-[#c3c3c3]"><Ico><path d="M1.500 1.500h9l4 4v9h-13zM10.500 1.500v4h4M4 8.500h8M4 11.500h8M4 5.500h3" /></Ico></button>
        <button aria-label="大纲"><Ico><rect x=".5" y="1.500" width="15" height="14" rx="1" /><path d="M3 5.500h1.500M6 5.500h7M3 8.500h1.500M6 8.500h7M3 11.500h1.500M6 11.500h7" /></Ico></button>
        <button aria-label="Web版式"><Ico><circle cx="8" cy="8" r="7" /><ellipse cx="8" cy="8" rx="3.500" ry="7" /><path d="M1 8h14M8 1v14M2 4.500h12M2 11.500h12" /></Ico></button>
        <button aria-label="护眼模式"><Ico><path d="M1 10q7-8 14 0-7 8-14 0zM8 3.500V0M3 4.500L1 1.500M13 4.500l2-3" /><circle cx="8" cy="10" r="2.500" /></Ico></button>
      </div>
      <div className="ml-3.5 h-[25px] w-px bg-[#dcdcdc]" />
      <button className="ml-3 flex items-center gap-1.5">
        <span className="w-[30px]">130%</span>
        <Arrow />
      </button>
      <button aria-label="缩小" className="ml-2.5 h-0.5 w-3 bg-[#555]" />
      <input type="range" aria-label="显示比例" defaultValue={100} className="ml-2.5 h-px w-[204px] appearance-none bg-[#555] [&::-webkit-slider-thumb]:appearance-none" />
      <div className="absolute right-0 bottom-0 flex h-[22px] w-[152px] items-center gap-1.5 border-l border-[#ddd] bg-white pl-3 text-base leading-5 text-black">
        <span className="flex size-4 shrink-0 items-center justify-center border border-black text-xs">拼</span>
        <span>中</span>
        <Ico w={12} h={14}><path d="M6 1.500q1 7-5 10 4 3 8-.5Q13 6 6 1.500z" /></Ico>
        <Ico w={13} h={14}><circle cx="2.500" cy="4" r="1.700" /><circle cx="10" cy="8" r="2" fill="#000" /><path d="M11.500 8q0 3-3 4.500" stroke="#000" strokeWidth="1.500" /></Ico>
        <span>简</span>
        <Ico c="#000"><circle cx="8" cy="8" r="5" /><circle cx="8" cy="8" r="2" /><circle cx="8" cy="8" r="6.200" strokeWidth="2" strokeDasharray="2.430 2.430" /></Ico>
        <div className="ml-1">
          <Ico w={7} h={14}><path d="M1 2h4v3H1zM0 9h6L3 12.500z" fill="#000" stroke="none" /></Ico>
        </div>
      </div>
    </footer>
  );
}

export default function App() {
  return (
    <div className="flex h-screen flex-col overflow-hidden bg-[#f4f4f4] font-['Open_Sans','Noto_Sans_CJK_SC',sans-serif] text-xs whitespace-nowrap">
      <TitleBar />
      <MenuBar />
      <Ribbon />
      <div className="relative flex min-h-0 flex-1 bg-[#e8e8e8]">
        <Documents />
        <ScrollRail />
        <SidePanel />
        <Watermark />
      </div>
      <StatusBar />
    </div>
  );
}
